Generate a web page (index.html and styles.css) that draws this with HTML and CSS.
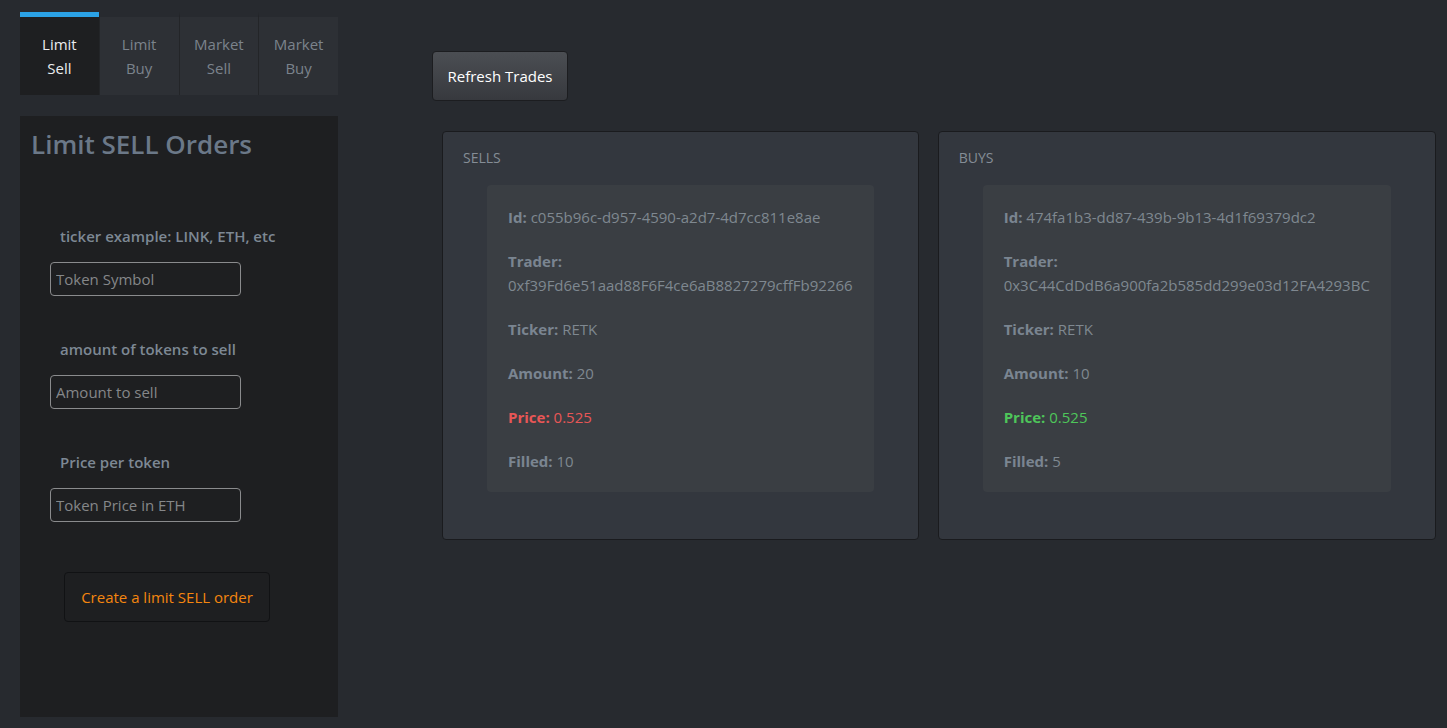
FILE: index.html
```
<!DOCTYPE html>
<html lang="en">
<head>
<meta charset="utf-8">
<title>Limit SELL Orders</title>
<link rel="stylesheet" href="styles.css">
</head>
<body>
<div class="page">
  <aside class="sidebar">
    <nav class="tabs">
      <div class="tab active">Limit<br>Sell</div>
      <div class="tab">Limit<br>Buy</div>
      <div class="tab">Market<br>Sell</div>
      <div class="tab">Market<br>Buy</div>
    </nav>
    <section class="order-panel">
      <h3 class="panel-title">Limit SELL Orders</h3>
      <form class="order-form">
        <div class="field">
          <label class="field-label">ticker example: LINK, ETH, etc</label>
          <input class="field-input" type="text" placeholder="Token Symbol">
        </div>
        <div class="field">
          <label class="field-label">amount of tokens to sell</label>
          <input class="field-input" type="text" placeholder="Amount to sell">
        </div>
        <div class="field">
          <label class="field-label">Price per token</label>
          <input class="field-input" type="text" placeholder="Token Price in ETH">
        </div>
        <button class="create-btn" type="button">Create a limit SELL order</button>
      </form>
    </section>
  </aside>
  <main class="trades">
    <button class="refresh-btn" type="button">Refresh Trades</button>
    <div class="books">
      <section class="book">
        <h2 class="book-title">SELLS</h2>
        <div class="order">
          <p><strong>Id:</strong> c055b96c-d957-4590-a2d7-4d7cc811e8ae</p>
          <p><strong>Trader:</strong><br><span class="addr">0xf39Fd6e51aad88F6F4ce6aB8827279cffFb92266</span></p>
          <p><strong>Ticker:</strong> RETK</p>
          <p><strong>Amount:</strong> 20</p>
          <p class="price sell"><strong>Price:</strong> 0.525</p>
          <p><strong>Filled:</strong> 10</p>
        </div>
      </section>
      <section class="book">
        <h2 class="book-title">BUYS</h2>
        <div class="order">
          <p><strong>Id:</strong> 474fa1b3-dd87-439b-9b13-4d1f69379dc2</p>
          <p><strong>Trader:</strong><br><span class="addr">0x3C44CdDdB6a900fa2b585dd299e03d12FA4293BC</span></p>
          <p><strong>Ticker:</strong> RETK</p>
          <p><strong>Amount:</strong> 10</p>
          <p class="price buy"><strong>Price:</strong> 0.525</p>
          <p><strong>Filled:</strong> 5</p>
        </div>
      </section>
    </div>
  </main>
</div>
</body>
</html>
```
FILE: styles.css
```
html, body {
  margin: 0;
  padding: 0;
}
body {
  background: #272a2f;
  font-family: "Open Sans", "Noto Sans", sans-serif;
  font-size: 15px;
  line-height: 24px;
  color: #7f8890;
}
.page {
  display: flex;
  align-items: flex-start;
  min-height: 728px;
}
.sidebar {
  margin-left: 20px;
  width: 318px;
  padding-top: 12px;
  flex: none;
}
.tabs {
  display: flex;
}
.tab {
  flex: 1;
  border-top: 5px solid transparent;
  background-clip: padding-box;
  background-color: #2d3035;
  text-align: center;
  padding: 15px 0;
  line-height: 24px;
  font-size: 15px;
  color: #7b838c;
}
.tab + .tab {
  border-left: 1px solid #232528;
}
.tab.active {
  background-color: #1e1f21;
  border-top-color: #2ba2e6;
  color: #e9ecef;
}
.order-panel {
  margin-top: 21px;
  background: #1e1f21;
  height: 601px;
  box-sizing: border-box;
  padding: 11px 11px;
}
.panel-title {
  margin: 0;
  font-size: 26px;
  line-height: 34px;
  font-weight: 600;
  color: #6b7888;
}
.order-form {
  margin-top: 64px;
  padding-left: 19px;
}
.field + .field {
  margin-top: 42px;
}
.field-label {
  display: block;
  padding-left: 10px;
  font-weight: 600;
  font-size: 15px;
  line-height: 22px;
  color: #7d8894;
  margin-bottom: 15px;
}
.field-input {
  display: block;
  width: 191px;
  height: 34px;
  box-sizing: border-box;
  border: 1px solid #8a8b8d;
  border-radius: 4px;
  background: transparent;
  padding: 0 5px;
  font-family: "Open Sans", "Noto Sans", sans-serif;
  font-size: 15px;
  color: #cfcfcf;
}
.field-input::placeholder {
  color: #858789;
}
.create-btn {
  display: block;
  margin: 50px 0 0 14px;
  width: 206px;
  height: 50px;
  background: #1e1f21;
  border: 1px solid #111214;
  border-radius: 4px;
  color: #f5860f;
  font-family: "Open Sans", "Noto Sans", sans-serif;
  font-size: 15px;
}
.trades {
  margin-left: 94px;
  padding-top: 51px;
}
.refresh-btn {
  display: block;
  width: 136px;
  height: 50px;
  background: linear-gradient(#4b4e53, #37393e);
  border: 1px solid #1c1d20;
  border-radius: 4px;
  color: #ffffff;
  font-family: "Open Sans", "Noto Sans", sans-serif;
  font-size: 15px;
}
.books {
  display: flex;
  align-items: flex-start;
  gap: 19px;
  margin-top: 30px;
  margin-left: 10px;
}
.book {
  background: #33373e;
  border: 1px solid #1a1b1e;
  border-radius: 4px;
  padding: 16px 20px 47px;
}
.book-title {
  margin: 0 0 17px;
  font-size: 14px;
  line-height: 20px;
  font-weight: 500;
  color: #858d96;
}
.order {
  margin: 0 24px;
  background: #3a3e43;
  border-radius: 4px;
  padding: 20px 21px 19px;
}
.order p {
  margin: 0 0 20px;
}
.order p:last-child {
  margin-bottom: 0;
}
.order strong {
  font-weight: 700;
  color: #7a8591;
}
.addr {
  white-space: nowrap;
}
.price.sell,
.price.sell strong {
  color: #e85656;
}
.price.buy,
.price.buy strong {
  color: #4ec65a;
}
```
